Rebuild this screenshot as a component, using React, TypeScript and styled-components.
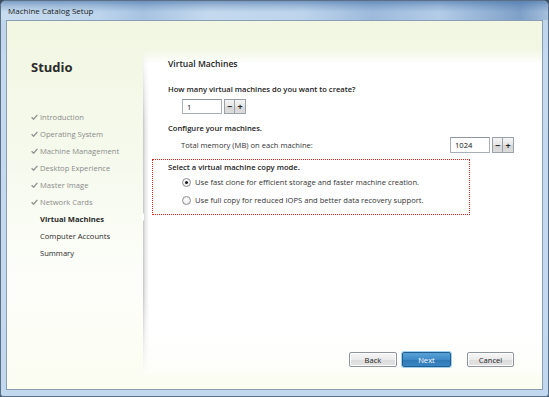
import React from "react";
import styled, { createGlobalStyle } from "styled-components";

const Global = createGlobalStyle`
  html, body { margin: 0; padding: 0; background: #3d4f63; }
  body { font-family: "Open Sans", "Liberation Sans", sans-serif; }
  * { box-sizing: border-box; }
`;

const Window = styled.div`
  width: 549px;
  height: 397px;
  display: flex;
  flex-direction: column;
  border: 1px solid #5b6f86;
  border-radius: 6px 6px 3px 3px;
  overflow: hidden;
  background:
    linear-gradient(to bottom, rgba(255,255,255,0) 0, rgba(255,255,255,0) 30px, #c5daef 60px, #c2d8ee 100%);
  background-color: #bfd5ec;
`;

const TitleBar = styled.div`
  height: 19px;
  flex: none;
  display: flex;
  align-items: center;
  padding-left: 7px;
  font-size: 8px;
  color: #1a1a1a;
  background:
    linear-gradient(to bottom, rgba(60,105,160,0.55) 0, rgba(60,105,160,0.25) 5px, rgba(255,255,255,0) 11px),
    linear-gradient(to right, #c8dcef 0, #bcd4ec 18%, #a7c3e2 26%, #c4d9ee 38%, #bdd4ec 55%, #9dbadc 68%, #b3cce8 80%, #7ea0c8 95%, #a6c0dd 100%);
`;

const Frame = styled.div`
  flex: 1;
  display: flex;
  padding: 0 5px 6px 5px;
`;

const Client = styled.div`
  flex: 1;
  display: flex;
  border: 1px solid #8b9db2;
  background: linear-gradient(to bottom, #f1f7e2 0, #f6faee 40%, #fdfefa 70%, #fbfdf1 100%);
`;

const Sidebar = styled.div`
  width: 136px;
  flex: none;
  padding: 38px 0 0 24px;
  display: flex;
  flex-direction: column;
`;

const Studio = styled.div`
  font-size: 13px;
  font-weight: 700;
  line-height: 16px;
  color: #2b2b2b;
  margin-bottom: 33px;
`;

const NavItem = styled.div<{ $state: "done" | "current" | "todo" }>`
  display: flex;
  align-items: center;
  height: 17px;
  font-size: 7.6px;
  white-space: nowrap;
  color: ${(p) => (p.$state === "done" ? "#8b8b8b" : "#2a2a2a")};
  font-weight: ${(p) => (p.$state === "current" ? 700 : 400)};
`;

const CheckSlot = styled.span`
  width: 9px;
  flex: none;
  display: flex;
  align-items: center;
`;

const Panel = styled.div`
  position: relative;
  flex: 1;
  margin: 29px 0 14px 0;
  padding: 8px 28px 8px 25px;
  display: flex;
  flex-direction: column;
  background: linear-gradient(to bottom, rgba(255,255,255,0) 0, #ffffff 14px, #ffffff 88%, rgba(255,255,255,0.4) 100%);
  &::before {
    content: "";
    position: absolute;
    left: 0;
    top: 0;
    bottom: 0;
    width: 6px;
    background: linear-gradient(to right, #c4c4c4 0, #e6e6e6 2px, rgba(255,255,255,0) 6px);
    -webkit-mask-image: linear-gradient(to bottom, transparent 0, #000 22%, #000 75%, transparent 100%);
    mask-image: linear-gradient(to bottom, transparent 0, #000 22%, #000 75%, transparent 100%);
  }
  &::after {
    content: "";
    position: absolute;
    left: -3px;
    top: 163px;
    border-top: 4px solid transparent;
    border-bottom: 4px solid transparent;
    border-right: 4px solid #ffffff;
  }
`;

const Heading = styled.div`
  font-size: 8.6px;
  font-weight: 600;
  line-height: 12px;
  color: #222;
  margin-bottom: 13px;
`;

const Question = styled.div<{ $gap?: number }>`
  font-size: 7.6px;
  font-weight: 600;
  line-height: 12px;
  color: #222;
  margin-bottom: ${(p) => p.$gap ?? 4}px;
`;

const SpinRow = styled.div<{ $indent: number }>`
  display: flex;
  align-items: center;
  margin-left: ${(p) => p.$indent}px;
`;

const Label = styled.div`
  flex: 1;
  font-size: 7.6px;
  color: #333;
`;

const NumInput = styled.div<{ $h: number }>`
  width: 40px;
  height: ${(p) => p.$h}px;
  border: 1px solid #a9afb6;
  border-top-color: #8e959d;
  background: #fff;
  font-size: 7.6px;
  color: #111;
  display: flex;
  align-items: center;
  padding-left: 4px;
  margin-right: 2px;
`;

const SpinBtn = styled.div<{ $h: number }>`
  width: 11px;
  height: ${(p) => p.$h}px;
  border: 1px solid #9ba1a8;
  background: linear-gradient(to bottom, #f4f4f4 0, #e6e6e6 50%, #d6d6d6 51%, #dcdcdc 100%);
  display: flex;
  align-items: center;
  justify-content: center;
  font-size: 9px;
  font-weight: 700;
  color: #222;
  line-height: 1;
  & + & { border-left: none; }
`;

const DottedBox = styled.div`
  margin: 6px 0 0 -16px;
  width: 318px;
  height: 56px;
  border: 1px dotted #e0201c;
  padding: 1px 0 0 15px;
`;

const RadioRow = styled.div`
  display: flex;
  align-items: center;
  height: 14px;
  margin-left: 14px;
  font-size: 7.6px;
  color: #333;
  gap: 4px;
`;

const Radio = styled.span<{ $on?: boolean }>`
  width: 9px;
  height: 9px;
  border-radius: 50%;
  border: 1px solid #8c8f94;
  background: radial-gradient(circle at 50% 40%, #ffffff 0, #e4e4e4 100%);
  display: flex;
  align-items: center;
  justify-content: center;
  &::after {
    content: "";
    width: 3px;
    height: 3px;
    border-radius: 50%;
    background: ${(p) => (p.$on ? "#1b1b1b" : "transparent")};
  }
`;

const Footer = styled.div`
  margin-top: auto;
  display: flex;
  justify-content: flex-end;
  align-items: center;
`;

const Button = styled.div<{ $primary?: boolean; $w: number; $ml: number }>`
  width: ${(p) => p.$w}px;
  height: 15px;
  margin-left: ${(p) => p.$ml}px;
  border-radius: 2px;
  display: flex;
  align-items: center;
  justify-content: center;
  font-size: 7.6px;
  color: ${(p) => (p.$primary ? "#ffffff" : "#222")};
  border: 1px solid ${(p) => (p.$primary ? "#1f5d8f" : "#8f959c")};
  background: ${(p) =>
    p.$primary
      ? "linear-gradient(to bottom, #5aa2d6 0, #3f8bc8 50%, #2c76b5 51%, #3b86c2 100%)"
      : "linear-gradient(to bottom, #f6f6f6 0, #ebebeb 50%, #dddddd 51%, #e3e3e3 100%)"};
  box-shadow: ${(p) => (p.$primary ? "0 0 0 1px #9fd0f0" : "inset 0 0 0 1px #fcfcfc")};
`;

const Check = () => (
  <svg width="7" height="6" viewBox="0 0 7 6">
    <path d="M0.6 3.2 L2.6 5.2 L6.4 0.8" fill="none" stroke="#8f8f8f" strokeWidth="1.3" />
  </svg>
);

const nav: { label: string; state: "done" | "current" | "todo" }[] = [
  { label: "Introduction", state: "done" },
  { label: "Operating System", state: "done" },
  { label: "Machine Management", state: "done" },
  { label: "Desktop Experience", state: "done" },
  { label: "Master Image", state: "done" },
  { label: "Network Cards", state: "done" },
  { label: "Virtual Machines", state: "current" },
  { label: "Computer Accounts", state: "todo" },
  { label: "Summary", state: "todo" },
];

export default function App() {
  return (
    <>
      <Global />
      <Window>
        <TitleBar>Machine Catalog Setup</TitleBar>
        <Frame>
          <Client>
            <Sidebar>
              <Studio>Studio</Studio>
              {nav.map((n) => (
                <NavItem key={n.label} $state={n.state}>
                  <CheckSlot>{n.state === "done" && <Check />}</CheckSlot>
                  {n.label}
                </NavItem>
              ))}
            </Sidebar>
            <Panel>
              <Heading>Virtual Machines</Heading>
              <Question>How many virtual machines do you want to create?</Question>
              <SpinRow $indent={14}>
                <NumInput $h={15}>1</NumInput>
                <SpinBtn $h={15}>−</SpinBtn>
                <SpinBtn $h={15}>+</SpinBtn>
              </SpinRow>
              <Question $gap={3} style={{ marginTop: 8 }}>Configure your machines.</Question>
              <SpinRow $indent={13}>
                <Label>Total memory (MB) on each machine:</Label>
                <NumInput $h={16}>1024</NumInput>
                <SpinBtn $h={16}>−</SpinBtn>
                <SpinBtn $h={16}>+</SpinBtn>
              </SpinRow>
              <DottedBox>
                <Question $gap={2}>Select a virtual machine copy mode.</Question>
                <RadioRow>
                  <Radio $on />
                  Use fast clone for efficient storage and faster machine creation.
                </RadioRow>
                <RadioRow style={{ marginTop: 4 }}>
                  <Radio />
                  Use full copy for reduced IOPS and better data recovery support.
                </RadioRow>
              </DottedBox>
              <Footer>
                <Button $w={48} $ml={0}>Back</Button>
                <Button $w={49} $ml={5} $primary>Next</Button>
                <Button $w={47} $ml={16}>Cancel</Button>
              </Footer>
            </Panel>
          </Client>
        </Frame>
      </Window>
    </>
  );
}
